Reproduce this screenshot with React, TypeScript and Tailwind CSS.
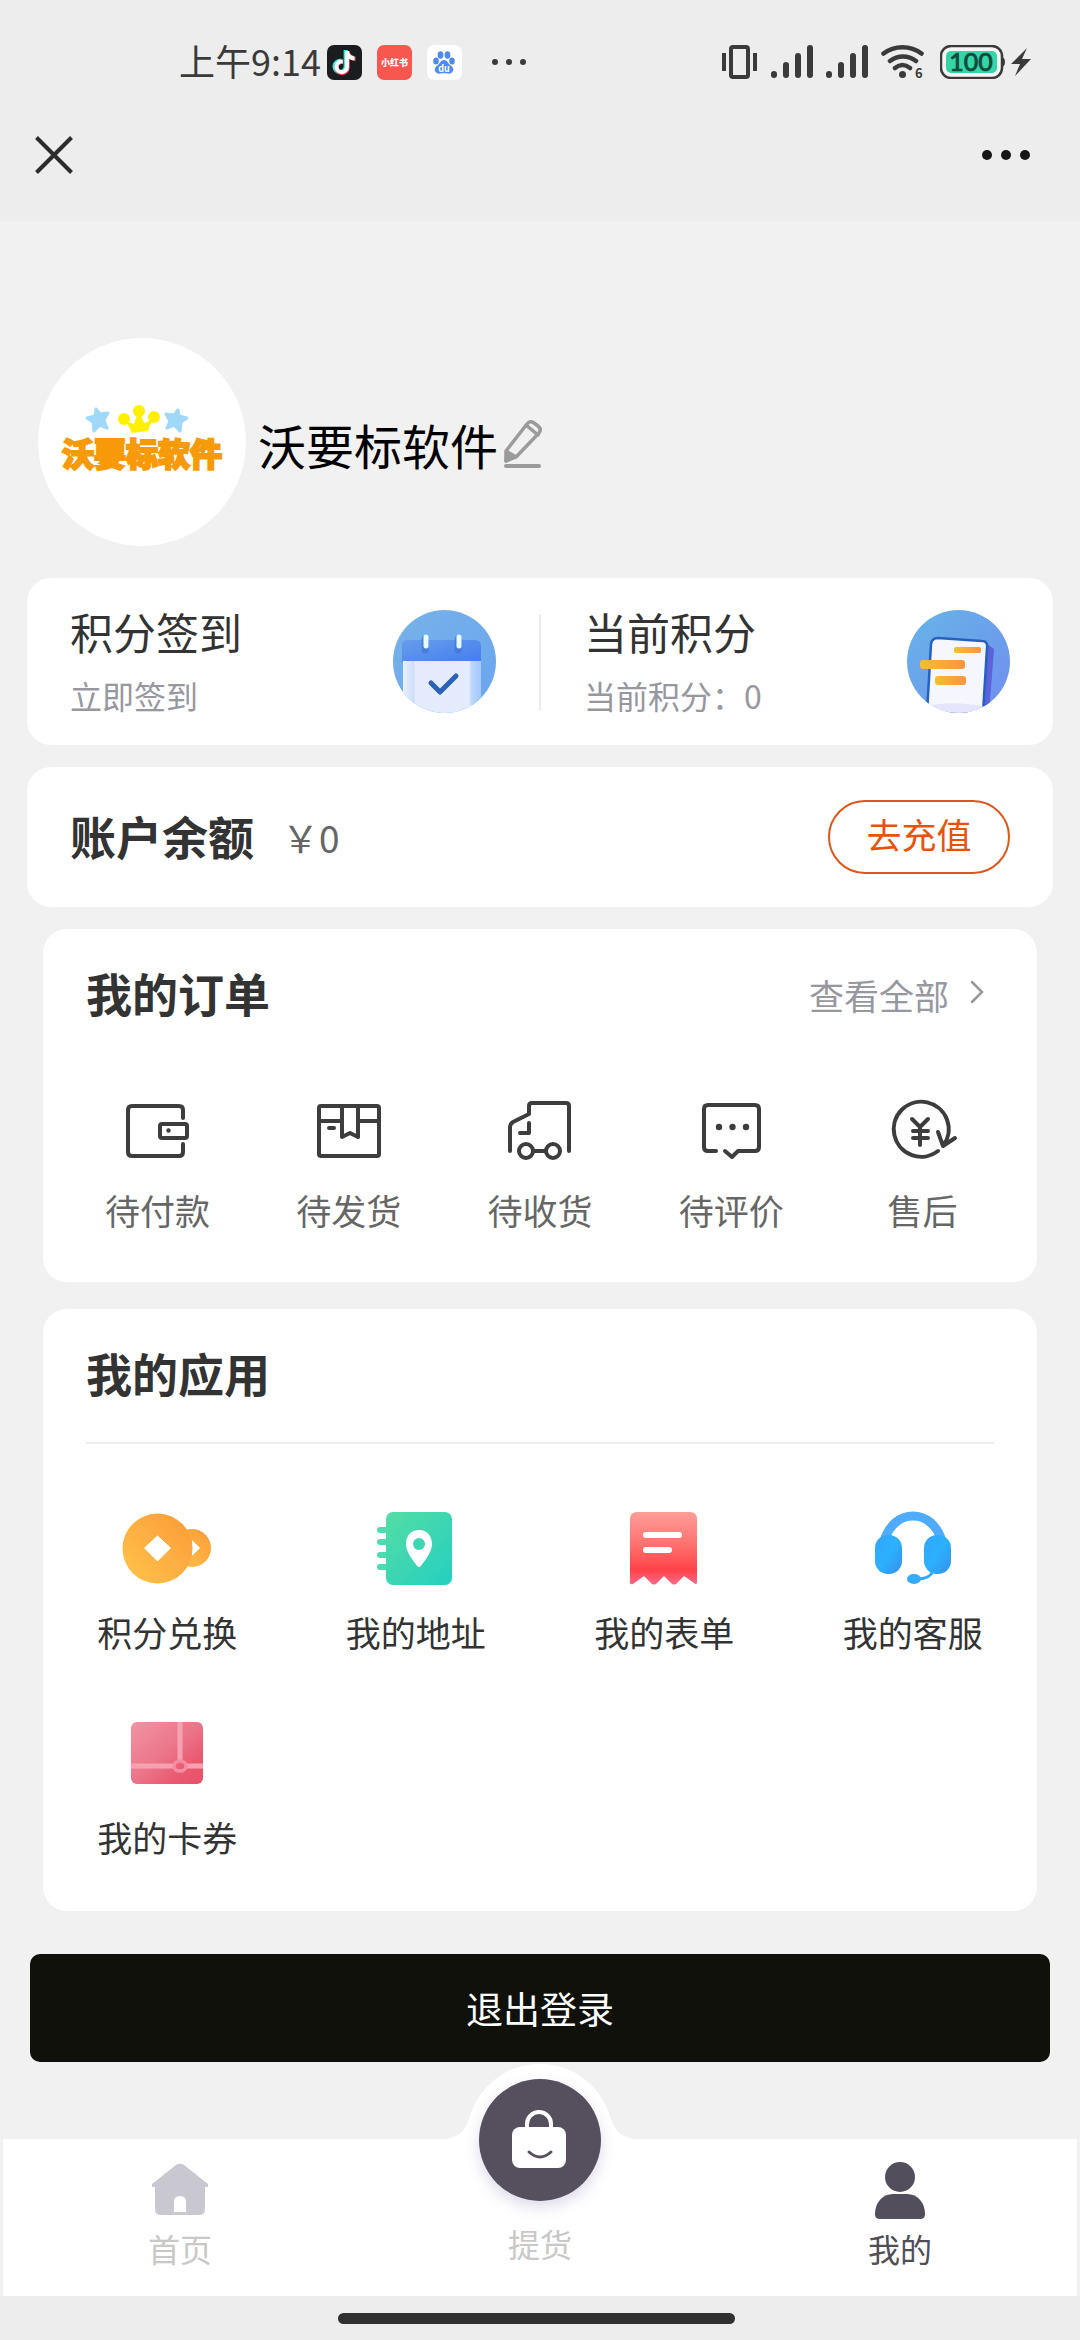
import type { ReactNode } from 'react'
import { FaTiktok } from 'react-icons/fa6'

interface MenuItem {
  label: string
  icon: ReactNode
}

/* ---------- Status bar ---------- */

function SignalIcon() {
  return (
    <svg width="42" height="34" viewBox="0 0 42 34" stroke="#3a3a3a" strokeWidth="6" strokeLinecap="round">
      <path d="M3 29v1M15 20v10M27 11v19M39 3v27" />
    </svg>
  )
}

function StatusBar() {
  return (
    <div className="flex h-[124px] items-center justify-between pl-[179px] pr-[49px] text-[#3a3a3a]">
      <div className="flex items-center">
        <span className="pb-1 text-[36px] leading-none">上午9:14</span>
        <div className="ml-[6px] flex items-center gap-[15px]">
          <span className="relative flex size-[35px] items-center justify-center rounded-[7px] bg-[#1b1c1f]">
            <FaTiktok className="absolute mr-[2px] mb-[1px] size-[24px] text-[#3fe6dd]" />
            <FaTiktok className="absolute mt-[1px] ml-[2px] size-[24px] text-[#f2405f]" />
            <FaTiktok className="absolute size-[23px] text-white" />
          </span>
          <span className="flex size-[35px] items-center justify-center rounded-[7px] bg-[#f7574f] text-[9px] font-black leading-none text-white">
            小红书
          </span>
          <span className="flex size-[35px] items-center justify-center rounded-[7px] bg-white">
            <svg width="35" height="35" viewBox="0 0 35 35" fill="#4f8bee">
              <ellipse cx="13.500" cy="10" rx="2.900" ry="3.800" />
              <ellipse cx="20.500" cy="10" rx="2.900" ry="3.800" />
              <ellipse cx="9" cy="16" rx="2.800" ry="3.500" />
              <ellipse cx="25" cy="16" rx="2.800" ry="3.500" />
              <path d="M17 15c3 0 4 3 6 5 3 2 4 4 3 6s-3 3-5 2.500c-3-.500-5-.500-8 0-2 .500-4-.500-5-2.500s0-4 3-6c2-2 3-5 6-5z" />
              <text x="17" y="27" textAnchor="middle" fontSize="9" fontWeight="700" fill="#fff">du</text>
            </svg>
          </span>
        </div>
        <svg className="ml-[30px]" width="34" height="8" viewBox="0 0 34 8" fill="#3a3a3a">
          <circle cx="3" cy="4" r="3" />
          <circle cx="17" cy="4" r="3" />
          <circle cx="31" cy="4" r="3" />
        </svg>
      </div>

      <div className="flex items-center gap-[13px]">
        <svg width="36" height="34" viewBox="0 0 36 34" fill="none" stroke="#3a3a3a" strokeWidth="4">
          <rect x="9" y="2" width="17" height="30" rx="2" />
          <path d="M2 8v18M33 8v18" />
        </svg>
        <SignalIcon />
        <SignalIcon />
        <svg width="44" height="44" viewBox="0 -4 44 44" fill="none" stroke="#3a3a3a" strokeWidth="4.500" strokeLinecap="round">
          <path d="M2.500 9.500c11-8.500 27-8.500 38 0M9 17c8-6 18-6 26 0M14 24c5-4 10-4 15 0" />
          <circle cx="21.500" cy="30.500" r="3.500" fill="#3a3a3a" stroke="none" />
          <text x="34" y="34" fontSize="13" fontWeight="700" fill="#3a3a3a" stroke="none">6</text>
        </svg>
        <div className="ml-[2px] flex items-center gap-[6px]">
          <svg width="65" height="34" viewBox="0 0 65 34">
            <path d="M62 12c4 1 4 9 0 10z" fill="#3a3a3a" />
            <rect x="1" y="1" width="61" height="32" rx="10" fill="#f4f6f5" stroke="#3a3a3a" strokeWidth="2.500" />
            <rect x="6" y="6" width="51" height="22" rx="5" fill="#35d5a8" />
            <text x="31" y="26" textAnchor="middle" fontSize="25" fontWeight="500" fill="#0f4a3a" stroke="#0f4a3a" strokeWidth=".700" fontFamily="Lato">100</text>
          </svg>
          <svg width="20" height="30" viewBox="0 0 20 30" fill="#3a3a3a">
            <path d="M16 1 0 17h9L4 29 20 12h-9z" />
          </svg>
        </div>
      </div>
    </div>
  )
}

/* ---------- Profile ---------- */

function StoreAvatar() {
  return (
    <div className="flex size-[208px] shrink-0 flex-col items-center justify-center rounded-full bg-white pb-[10px]">
      <svg className="mr-[10px]" width="108" height="30" viewBox="0 0 108 30">
        <g fill="#9fd8f8" stroke="#9fd8f8" strokeWidth="3" strokeLinejoin="round">
          <path d="m13 5 4 5 8-1-4 7 3 8-7-3-6 6-1-9-6-4 8-2z" />
          <path d="m95 6-4 5-8-1 4 7-3 7 7-3 6 6 1-9 6-4-8-2z" />
        </g>
        <g fill="#fff000">
          <circle cx="41" cy="15" r="6" />
          <circle cx="56" cy="7" r="6" />
          <circle cx="71" cy="13" r="6" />
          <path d="m43 17 8 3 3-9h4l3 8 8-3-4 11q-8 1-16 2z" />
        </g>
      </svg>
      <span className="text-[32px] font-black leading-9 text-[#f79a0a] [-webkit-text-stroke:2px_#f79a0a]">沃要标软件</span>
    </div>
  )
}

function EditIcon() {
  return (
    <svg width="38" height="48" viewBox="0 0 38 48" fill="none" stroke="#9b9b9b" strokeWidth="3.500" strokeLinecap="round" strokeLinejoin="round">
      <path d="M2 41V31L23 4q3-4 7-1l4 3q4 3 1 7L12 37zM22 5l12 10M2 31l10 6" />
      <path d="m2 41 1-7 5 4z" fill="#9b9b9b" />
      <path d="M2 46h33" strokeWidth="4" />
    </svg>
  )
}

/* ---------- Points card ---------- */

function CheckInIcon() {
  return (
    <svg width="103" height="103" viewBox="0 0 103 103">
      <defs>
        <linearGradient id="checkBg" x1="0" y1="0" x2="1" y2="1">
          <stop offset="0" stopColor="#78b2e8" />
          <stop offset="1" stopColor="#69a5f0" />
        </linearGradient>
        <linearGradient id="checkTop" x1="0" y1="0" x2="1" y2="1">
          <stop offset="0" stopColor="#679deb" />
          <stop offset="1" stopColor="#447df0" />
        </linearGradient>
        <linearGradient id="checkPage" x1="0" x2="1">
          <stop offset="0" stopColor="#e7f0fe" />
          <stop offset=".140" stopColor="#cfdffb" />
          <stop offset=".160" stopColor="#e4ebfc" />
          <stop offset=".850" stopColor="#e4ebfc" />
          <stop offset=".870" stopColor="#bcdafd" />
          <stop offset="1" stopColor="#a5c6fb" />
        </linearGradient>
        <clipPath id="checkClip">
          <circle cx="51.500" cy="51.500" r="51.500" />
        </clipPath>
      </defs>
      <g clipPath="url(#checkClip)">
        <rect width="103" height="103" fill="url(#checkBg)" />
        <path d="M9 52V35q0-5 5-5h68q6 0 6 6v16z" fill="url(#checkTop)" />
        <path d="M10 51h78v52H10z" fill="url(#checkPage)" />
      </g>
      <path d="M32 29v11M65 29v11" stroke="#3f72cf" strokeWidth="7" strokeLinecap="round" opacity=".600" />
      <path d="M33 27v9M66 27v9" stroke="#e5f9ff" strokeWidth="5" strokeLinecap="round" />
      <path d="m38 73 9 9 16-16" fill="none" stroke="#2b62b5" strokeWidth="5" strokeLinecap="round" strokeLinejoin="round" />
    </svg>
  )
}

function PointsIcon() {
  return (
    <svg width="103" height="103" viewBox="0 0 103 103">
      <defs>
        <linearGradient id="pointsBg" x1="0" y1="0" x2="1" y2="1">
          <stop offset="0" stopColor="#66b5e6" />
          <stop offset="1" stopColor="#718df0" />
        </linearGradient>
        <linearGradient id="pointsBar" x1="0" x2="1">
          <stop offset="0" stopColor="#efc12f" />
          <stop offset="1" stopColor="#fa9440" />
        </linearGradient>
        <clipPath id="pointsClip">
          <circle cx="51.500" cy="51.500" r="51.500" />
        </clipPath>
      </defs>
      <g clipPath="url(#pointsClip)">
        <rect width="103" height="103" fill="url(#pointsBg)" />
        <path d="m80 34 7 5-5 64H72z" fill="#5a62dc" />
        <path d="m20 103 4-69q1-6 7-6l44 3q6 0 5 7l-4 65z" fill="#f6f6ff" stroke="#2462be" strokeWidth="2.500" />
        <path d="M20 96q25-6 60 1v6H20z" fill="#e4e5fb" />
      </g>
      <rect x="47" y="37" width="27" height="6" rx="2" fill="url(#pointsBar)" />
      <rect x="13" y="50" width="45" height="9" rx="3" fill="url(#pointsBar)" />
      <rect x="28" y="66" width="31" height="9" rx="3" fill="url(#pointsBar)" />
    </svg>
  )
}

function PointsCell({ title, note, icon }: { title: string; note: string; icon: ReactNode }) {
  return (
    <button type="button" className="flex flex-1 items-center justify-between px-[43px] text-left">
      <span className="flex flex-col gap-[26px] pb-[2px]">
        <span className="text-[43px] leading-none text-[#333333]">{title}</span>
        <span className="text-[32px] leading-none text-[#97979f]">{note}</span>
      </span>
      {icon}
    </button>
  )
}

/* ---------- Orders ---------- */

function OrderIcon({ children }: { children: ReactNode }) {
  return (
    <svg width="72" height="72" viewBox="0 0 72 72" fill="none" stroke="#3d3d3d" strokeWidth="4" strokeLinecap="round" strokeLinejoin="round">
      {children}
    </svg>
  )
}

const orders: MenuItem[] = [
  {
    label: '待付款',
    icon: (
      <OrderIcon>
        <path d="M61 23v-8q0-4-4-4H10q-4 0-4 4v42q0 4 4 4h47q4 0 4-4v-8" />
        <rect x="38" y="29" width="27" height="14" rx="2" />
        <circle cx="46.500" cy="35.500" r="2.200" fill="#3d3d3d" stroke="none" />
      </OrderIcon>
    ),
  },
  {
    label: '待发货',
    icon: (
      <OrderIcon>
        <rect x="6" y="11" width="60" height="50" rx="2" />
        <path d="M6 26h23M45 26h21M29 11v31l8-4 8 4V11M16 33h5" />
      </OrderIcon>
    ),
  },
  {
    label: '待收货',
    icon: (
      <OrderIcon>
        <path d="M6 56V32q0-3 3-5l16-8V11q0-3 3-3h34q3 0 3 3v45M25 28v10H16M30 56h11" />
        <circle cx="22" cy="56" r="7" />
        <circle cx="49" cy="56" r="7" />
      </OrderIcon>
    ),
  },
  {
    label: '待评价',
    icon: (
      <OrderIcon>
        <path d="M21 56h-8q-4 0-4-4V14q0-4 4-4h47q4 0 4 4v38q0 4-4 4H43l-6 6-7-6" />
        <g fill="#3d3d3d" stroke="none">
          <circle cx="24" cy="32" r="3.200" />
          <circle cx="37.500" cy="32" r="3.200" />
          <circle cx="51" cy="32" r="3.200" />
        </g>
      </OrderIcon>
    ),
  },
  {
    label: '售后',
    icon: (
      <OrderIcon>
        <path d="M52 56A27.500 27.500 0 1 1 57 51M52 37l5 14 12-8" />
        <path d="m26 24 8 8 8-8M34 32v18M27 36h15M27 43h15" />
      </OrderIcon>
    ),
  },
]

/* ---------- Apps ---------- */

const apps: MenuItem[] = [
  {
    label: '积分兑换',
    icon: (
      <svg width="90" height="90" viewBox="0 0 90 90">
        <defs>
          <linearGradient id="coin" x1="0" y1="1" x2="1" y2="0">
            <stop offset="0" stopColor="#ffc44a" />
            <stop offset=".600" stopColor="#fdab40" />
            <stop offset="1" stopColor="#f99c37" />
          </linearGradient>
        </defs>
        <circle cx="70" cy="45" r="19" fill="url(#coin)" />
        <path d="m70 37 8 8-8 8z" fill="#fff" />
        <circle cx="35.500" cy="45.500" r="35" fill="url(#coin)" />
        <path d="m35.500 33 13 12-13 13-13-13z" fill="#fff" stroke="#fff" strokeLinejoin="round" />
      </svg>
    ),
  },
  {
    label: '我的地址',
    icon: (
      <svg width="90" height="90" viewBox="0 0 90 90">
        <defs>
          <linearGradient id="book" x1="0" y1="0" x2="1" y2="1">
            <stop offset="0" stopColor="#54dda4" />
            <stop offset="1" stopColor="#25cfc1" />
          </linearGradient>
        </defs>
        <path d="M9 27h9M9 39h9M9 52h9M9 64h9" stroke="#4fd9b0" strokeWidth="6" strokeLinecap="round" />
        <rect x="15" y="9" width="66" height="73" rx="7" fill="url(#book)" />
        <path d="M48 27c-8 0-13 6-13 14 0 9 8 17 11 22q2 2 4 0c3-5 11-13 11-22 0-8-5-14-13-14z" fill="#fff" />
        <circle cx="48" cy="41" r="6" fill="#3ed6b4" />
      </svg>
    ),
  },
  {
    label: '我的表单',
    icon: (
      <svg width="90" height="90" viewBox="0 0 90 90">
        <defs>
          <linearGradient id="form" x1="0" y1="0" x2="0" y2="1">
            <stop offset="0" stopColor="#ff9d97" />
            <stop offset=".450" stopColor="#ff716f" />
            <stop offset=".800" stopColor="#ff4248" />
            <stop offset="1" stopColor="#fb6a8b" />
          </linearGradient>
        </defs>
        <path d="M11 80V16q0-7 7-7h53q7 0 7 7v64q-1 2-3 0L65 73l-8 8q-2 1-4 0l-8-8-8 8q-2 1-4 0l-8-8-11 8q-2 1-3-1z" fill="url(#form)" />
        <path d="M27 32h33M27 47h23" stroke="#fff" strokeWidth="6" strokeLinecap="round" />
      </svg>
    ),
  },
  {
    label: '我的客服',
    icon: (
      <svg width="90" height="90" viewBox="0 0 90 90">
        <defs>
          <linearGradient id="ear" x1="0" y1="0" x2="1" y2="1">
            <stop offset="0" stopColor="#33a5fb" />
            <stop offset=".500" stopColor="#2cb1fd" />
            <stop offset="1" stopColor="#3390ec" />
          </linearGradient>
        </defs>
        <path d="M16 38C21 22 32 13 45 13s24 9 29 25" fill="none" stroke="#4fabfb" strokeWidth="9" />
        <path d="M65 68q-3 8-16 8" fill="none" stroke="#33a7f8" strokeWidth="3" />
        <rect x="7" y="32" width="27" height="39" rx="13" fill="url(#ear)" />
        <rect x="56" y="32" width="27" height="39" rx="13" fill="url(#ear)" />
        <ellipse cx="46" cy="76" rx="7" ry="5" fill="#33abfb" />
      </svg>
    ),
  },
  {
    label: '我的卡券',
    icon: (
      <svg width="90" height="90" viewBox="0 0 90 90">
        <defs>
          <linearGradient id="coupon" x1="0" y1="0" x2="1" y2="1">
            <stop offset="0" stopColor="#f095a6" />
            <stop offset=".500" stopColor="#ec7488" />
            <stop offset=".750" stopColor="#ea5a70" />
            <stop offset="1" stopColor="#ea5168" />
          </linearGradient>
        </defs>
        <rect x="9" y="14" width="72" height="62" rx="6" fill="url(#coupon)" />
        <path d="M58 14v39M9 58h43M63 58h18" stroke="#f5a1b2" strokeWidth="5" />
        <ellipse cx="58" cy="58" rx="6" ry="5" fill="none" stroke="#f48da2" strokeWidth="3.500" />
      </svg>
    ),
  },
]

/* ---------- Tab bar ---------- */

function HomeIcon() {
  return (
    <svg width="60" height="60" viewBox="0 0 60 60" fill="#c9c8d0">
      <path
        fillRule="evenodd"
        d="M26 5q4-3 8 0l24 19v3h-3v22q0 6-6 6H11q-6 0-6-6V27H2v-3zM24 52h12V42q0-6-6-6t-6 6z"
      />
    </svg>
  )
}

function UserIcon() {
  return (
    <svg width="60" height="60" viewBox="0 0 60 60" fill="#524e5b">
      <circle cx="30" cy="17" r="15" />
      <path d="M23 34h14c11 0 18 9 18 20 0 4-2 5-6 5H11c-4 0-6-1-6-5 0-11 7-20 18-20z" />
    </svg>
  )
}

function TabBar() {
  return (
    <nav className="relative mx-[3px] bg-white text-[32px] leading-none">
      <svg className="absolute -top-[75px] left-1/2 -translate-x-1/2" width="220" height="76" viewBox="0 0 220 76" fill="#fff">
        <path d="M0 76c20 0 32-3 38-18C48 22 76 0 110 0s62 22 72 58c6 15 18 18 38 18z" />
      </svg>
      <div className="-mx-[3px] grid h-[157px] grid-cols-3">
        <a href="#home" className="flex flex-col items-center gap-3 pt-[21px] text-[#c8c8c8]">
          <HomeIcon />
          首页
        </a>
        <a href="#pickup" className="relative flex flex-col items-center justify-end pb-[37px] text-[#c8c8c8]">
          <span className="absolute -top-[60px] flex size-[122px] items-center justify-center rounded-full bg-[#564f5d] shadow-[0_6px_14px_rgba(120,110,170,0.25)]">
            <svg width="60" height="60" viewBox="0 0 60 60" fill="none" strokeLinecap="round">
              <path d="M17 20v-6a12 12 0 0 1 24 0v6" stroke="#fff" strokeWidth="4" />
              <rect x="2" y="17" width="54" height="41" rx="8" fill="#fff" />
              <path d="M19 42q11 10 22 0" stroke="#564f5d" strokeWidth="3" />
            </svg>
          </span>
          提货
        </a>
        <a href="#mine" aria-current="page" className="flex flex-col items-center gap-3 pt-[21px] text-[#504d56]">
          <UserIcon />
          我的
        </a>
      </div>
    </nav>
  )
}

export default function App() {
  return (
    <div className="flex min-h-screen flex-col bg-[#f1f1f1] font-['Noto_Sans_CJK_SC',sans-serif]">
      <header className="bg-[#ededed]">
        <StatusBar />
        <div className="flex items-center justify-between pb-[47px] pl-[35px] pr-[49px] pt-3">
          <button type="button" aria-label="关闭">
            <svg width="38" height="38" viewBox="0 0 38 38" stroke="#2c2c2c" strokeWidth="4">
              <path d="M1.500 1.500l35 35M36.500 1.500l-35 35" />
            </svg>
          </button>
          <button type="button" aria-label="更多">
            <svg width="50" height="12" viewBox="0 0 50 12" fill="#161616">
              <circle cx="6" cy="6" r="5" />
              <circle cx="25" cy="6" r="5" />
              <circle cx="44" cy="6" r="5" />
            </svg>
          </button>
        </div>
      </header>

      <main className="flex flex-1 flex-col">
        {/* Profile */}
        <section className="flex items-center pl-[38px] pt-[117px]">
          <StoreAvatar />
          <div className="ml-3 flex items-center gap-[6px] pt-1">
            <h1 className="text-[48px] leading-none text-black">沃要标软件</h1>
            <button type="button" aria-label="编辑昵称">
              <EditIcon />
            </button>
          </div>
        </section>

        {/* Points */}
        <section className="mx-[27px] mt-8 flex h-[167px] items-stretch rounded-3xl bg-white">
          <PointsCell title="积分签到" note="立即签到" icon={<CheckInIcon />} />
          <div className="my-auto h-24 w-[2px] bg-[#ececec]" />
          <PointsCell title="当前积分" note="当前积分：0" icon={<PointsIcon />} />
        </section>

        {/* Balance */}
        <section className="mx-[27px] mt-[22px] flex items-center rounded-3xl bg-white px-[43px] py-[33px]">
          <h2 className="pb-1 text-[46px] font-bold leading-none text-[#333333]">账户余额</h2>
          <span className="ml-7 text-[37px] leading-none text-[#666666]">￥0</span>
          <button
            type="button"
            className="ml-auto h-[74px] w-[182px] rounded-full border-2 border-[#e0561a] pb-[7px] text-[35px] leading-none text-[#e6540c]"
          >
            去充值
          </button>
        </section>

        {/* Orders */}
        <section className="mx-[43px] mt-[22px] rounded-3xl bg-white pb-[55px] pt-10">
          <div className="flex items-center justify-between pl-[43px] pr-[52px]">
            <h2 className="text-[46px] font-bold leading-none text-[#333333]">我的订单</h2>
            <a href="#orders" className="flex items-center gap-5 pt-1 text-[35px] leading-none text-[#97979f]">
              查看全部
              <svg className="mb-1" width="16" height="26" viewBox="0 0 16 26" fill="none" stroke="#97979f" strokeWidth="2.500" strokeLinecap="round">
                <path d="m3 3 10 10L3 23" />
              </svg>
            </a>
          </div>
          <div className="mt-20 grid grid-cols-5 px-[19px]">
            {orders.map((item) => (
              <a key={item.label} href="#orders" className="flex flex-col items-center gap-[25px] text-[35px] leading-none text-[#666666]">
                {item.icon}
                {item.label}
              </a>
            ))}
          </div>
        </section>

        {/* Apps */}
        <section className="mx-[43px] mt-[27px] rounded-3xl bg-white pb-[57px] pt-10">
          <h2 className="px-[43px] text-[46px] font-bold leading-none text-[#333333]">我的应用</h2>
          <div className="mx-[43px] mt-[47px] h-[2px] bg-[#eeeeee]" />
          <div className="mt-[59px] grid grid-cols-4 gap-y-[59px]">
            {apps.map((item) => (
              <a key={item.label} href="#apps" className="flex flex-col items-center gap-[21px] text-[35px] leading-none text-[#333333]">
                {item.icon}
                {item.label}
              </a>
            ))}
          </div>
        </section>

        <button type="button" className="mx-[30px] mb-[73px] mt-[43px] h-[108px] rounded-[10px] bg-[#10110b] text-[37px] leading-none text-white">
          退出登录
        </button>
      </main>

      <TabBar />
      <div className="flex h-11 items-center justify-center bg-[#ededed] pr-[7px]">
        <div className="h-[11px] w-[37%] rounded-full bg-[#303030]" />
      </div>
    </div>
  )
}
